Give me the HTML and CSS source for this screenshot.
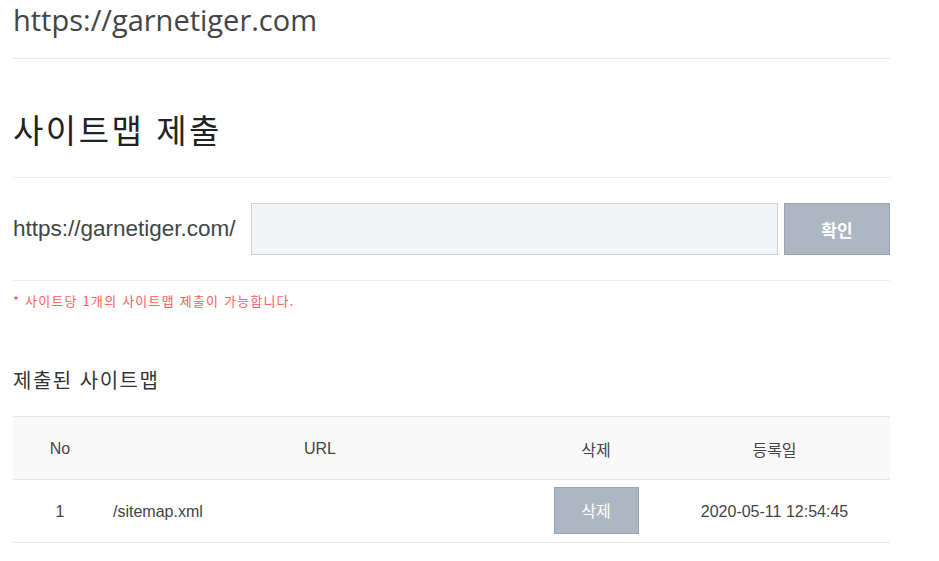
FILE: index.html
```html
<!DOCTYPE html>
<html lang="ko">
<head>
<meta charset="utf-8">
<title>사이트맵 제출</title>
<link rel="stylesheet" href="styles.css">
</head>
<body>
<div class="page">
  <div class="site-title">https://garnetiger.com</div>
  <div class="section-head">
    <h1>사이트맵 제출</h1>
  </div>
  <form class="submit-row">
    <span class="prefix">https://garnetiger.com/</span>
    <input class="path-input" type="text">
    <button class="btn-confirm" type="button">확인</button>
  </form>
  <p class="note">* 사이트당 1개의 사이트맵 제출이 가능합니다.</p>
  <h2 class="sub-title">제출된 사이트맵</h2>
  <table class="sitemap-table">
    <thead>
      <tr>
        <th class="col-no">No</th>
        <th class="col-url">URL</th>
        <th class="col-del">삭제</th>
        <th class="col-date">등록일</th>
      </tr>
    </thead>
    <tbody>
      <tr>
        <td class="col-no">1</td>
        <td class="col-url url-cell">/sitemap.xml</td>
        <td class="col-del btn-cell"><button class="btn-delete" type="button">삭제</button></td>
        <td class="col-date">2020-05-11 12:54:45</td>
      </tr>
    </tbody>
  </table>
</div>
</body>
</html>
```

FILE: styles.css
```css
* { box-sizing: border-box; }
html, body { margin: 0; padding: 0; background: #fff; }
body {
  font-family: "Liberation Sans", "Noto Sans CJK KR", sans-serif;
  color: #444;
}
.page {
  width: 877px;
  margin-left: 13px;
}
.site-title {
  font-family: "Open Sans", "Noto Sans CJK KR", sans-serif;
  font-size: 29px;
  line-height: 40px;
  color: #444;
  height: 59px;
  border-bottom: 1px solid #e8e8e8;
}
.section-head {
  height: 119px;
  border-bottom: 1px solid #eeeeee;
  padding-top: 46px;
}
.section-head h1 {
  margin: 0;
  font-family: "Noto Sans CJK KR", sans-serif;
  font-weight: 400;
  font-size: 33px;
  line-height: 48px;
  letter-spacing: 2.5px;
  color: #222;
}
.submit-row {
  display: flex;
  align-items: center;
  margin: 0;
  padding: 25px 0 25px;
  border-bottom: 1px solid #eeeeee;
}
.prefix {
  font-size: 22.5px;
  color: #444;
  width: 238px;
}
.path-input {
  width: 527px;
  height: 52px;
  background: #f3f4f6;
  border: 1px solid #cdd1d6;
  margin: 0;
  padding: 0 10px;
}
.btn-confirm {
  margin-left: 6px;
  width: 106px;
  height: 52px;
  background: #adb7c1;
  border: 1px solid #98a3ae;
  color: #fff;
  font-family: "Noto Sans CJK KR", sans-serif;
  font-weight: 700;
  font-size: 17px;
  padding: 0;
}
.note {
  margin: 11px 0 0;
  font-family: "Noto Sans CJK KR", sans-serif;
  font-size: 13px;
  line-height: 18px;
  letter-spacing: 1.2px;
  color: #ff5c5c;
}
.sub-title {
  margin: 56px 0 22px;
  font-family: "Noto Sans CJK KR", sans-serif;
  font-weight: 400;
  font-size: 20px;
  line-height: 28px;
  color: #333;
  letter-spacing: 1.5px;
}
.sitemap-table {
  width: 877px;
  border-collapse: collapse;
  border-top: 1px solid #e6e6e6;
  font-size: 16px;
  color: #444;
}
.sitemap-table th {
  font-weight: 400;
  background: #f9f9f9;
  height: 63px;
  border-bottom: 1px solid #e6e6e6;
  text-align: center;
  padding: 2px 0 0;
}
.sitemap-table td {
  height: 63px;
  border-bottom: 1px solid #e6e6e6;
  text-align: center;
  padding: 2px 0 0;
}
.col-no { width: 94px; }
.col-url { width: 426px; }
.col-del { width: 126px; }
.col-date { width: 231px; }
.sitemap-table td.url-cell {
  text-align: left;
  padding-left: 6px;
}
.sitemap-table td.btn-cell {
  padding: 0 0 2px;
}
.btn-delete {
  width: 85px;
  height: 47px;
  background: #adb7c1;
  border: 1px solid #98a3ae;
  color: #fff;
  font-family: "Noto Sans CJK KR", sans-serif;
  font-size: 16px;
  padding: 0;
  vertical-align: middle;
}
```
